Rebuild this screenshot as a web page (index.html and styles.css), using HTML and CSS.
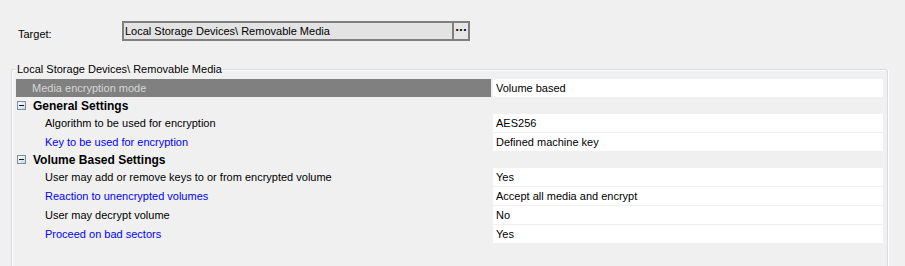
FILE: index.html
```html
<!DOCTYPE html>
<html lang="en">

<head>
    <meta charset="UTF-8">
    <title>Removable Media Encryption</title>
    <link rel="stylesheet" href="styles.css">
</head>

<body>
    <div class="target-row">
        <span class="target-label">Target:</span>
        <div class="target-box">
            <span class="target-text">Local Storage Devices\ Removable Media</span>
            <button class="browse">...</button>
        </div>
    </div>

    <fieldset class="group">
        <legend>Local Storage Devices\ Removable Media</legend>
        <div class="grid">
            <div class="row">
                <div class="name selected">Media encryption mode</div>
                <div class="value">Volume based</div>
            </div>

            <div class="section">
                <svg class="toggle" width="9" height="9" viewBox="0 0 9 9">
                    <defs>
                        <linearGradient id="tg" x1="0" y1="0" x2="1" y2="1">
                            <stop offset="0" stop-color="#ffffff"/>
                            <stop offset="1" stop-color="#c9d3dd"/>
                        </linearGradient>
                    </defs>
                    <rect x="0.5" y="0.5" width="8" height="8" fill="url(#tg)" stroke="#7a8ea3"/>
                    <rect x="2" y="4" width="5" height="1" fill="#1a1a1a"/>
                </svg>
                General Settings
            </div>
            <div class="row">
                <div class="name">Algorithm to be used for encryption</div>
                <div class="value">AES256</div>
            </div>
            <div class="row">
                <div class="name link">Key to be used for encryption</div>
                <div class="value">Defined machine key</div>
            </div>

            <div class="section">
                <svg class="toggle" width="9" height="9" viewBox="0 0 9 9">
                    <rect x="0.5" y="0.5" width="8" height="8" fill="url(#tg)" stroke="#7a8ea3"/>
                    <rect x="2" y="4" width="5" height="1" fill="#1a1a1a"/>
                </svg>
                Volume Based Settings
            </div>
            <div class="row">
                <div class="name">User may add or remove keys to or from encrypted volume</div>
                <div class="value">Yes</div>
            </div>
            <div class="row">
                <div class="name link">Reaction to unencrypted volumes</div>
                <div class="value">Accept all media and encrypt</div>
            </div>
            <div class="row">
                <div class="name">User may decrypt volume</div>
                <div class="value">No</div>
            </div>
            <div class="row">
                <div class="name link">Proceed on bad sectors</div>
                <div class="value">Yes</div>
            </div>
        </div>
    </fieldset>
</body>

</html>
```

FILE: styles.css
```css
body {
    font-family: "Liberation Sans", Arial, sans-serif;
    font-size: 11px;
    color: #000;
    background-color: #f0f0f0;
    margin: 0;
    padding: 0;
    width: 905px;
    height: 266px;
    overflow: hidden;
}

.target-row {
    display: flex;
    align-items: center;
    padding: 21px 0 0 18px;
    height: 20px;
}

.target-label {
    width: 104px;
    padding-top: 6px;
}

.target-box {
    display: flex;
    align-items: stretch;
    width: 344px;
    height: 16px;
    border: 2px solid #7f7f7f;
    background-color: #e3e3e3;
}

.target-text {
    flex: 1;
    padding-left: 1px;
    line-height: 16px;
}

.browse {
    width: 16px;
    margin: 0;
    padding: 0 0 6px 0;
    border: none;
    border-left: 2px solid #7f7f7f;
    background-color: #e6e6e6;
    font-family: "DejaVu Sans", sans-serif;
    font-size: 10px;
    font-weight: bold;
    letter-spacing: 0;
    line-height: 10px;
    color: #000;
}

/* open at the bottom: the box runs on below the visible area */
.group {
    box-sizing: border-box;
    margin: 22px 0 0 11px;
    padding: 3px 3px 0 4px;
    width: 877px;
    height: 203px;
    border: 1px solid #d5dde4;
    border-bottom: none;
    border-radius: 3px 3px 0 0;
    box-shadow: inset 1px 1px 0 #fff, 1px 0 0 #fff;
}

.group legend {
    padding: 0 1px;
    line-height: 13px;
}

.grid {
    display: flex;
    flex-direction: column;
    gap: 1px;
}

.row {
    display: grid;
    grid-template-columns: 475px 390px;
    column-gap: 2px;
    height: 18px;
    line-height: 18px;
}

.name {
    padding-left: 29px;
    white-space: nowrap;
}

.name.selected {
    padding-left: 16px;
    background-color: #808080;
    color: #d6d6d6;
}

.link {
    color: #0000ff;
}

.value {
    padding-left: 3px;
    background-color: #fff;
}

.section {
    display: flex;
    align-items: center;
    gap: 7px;
    height: 15px;
    padding-left: 1px;
    font-weight: bold;
    font-size: 12px;
}

.toggle {
    flex: none;
}
```
